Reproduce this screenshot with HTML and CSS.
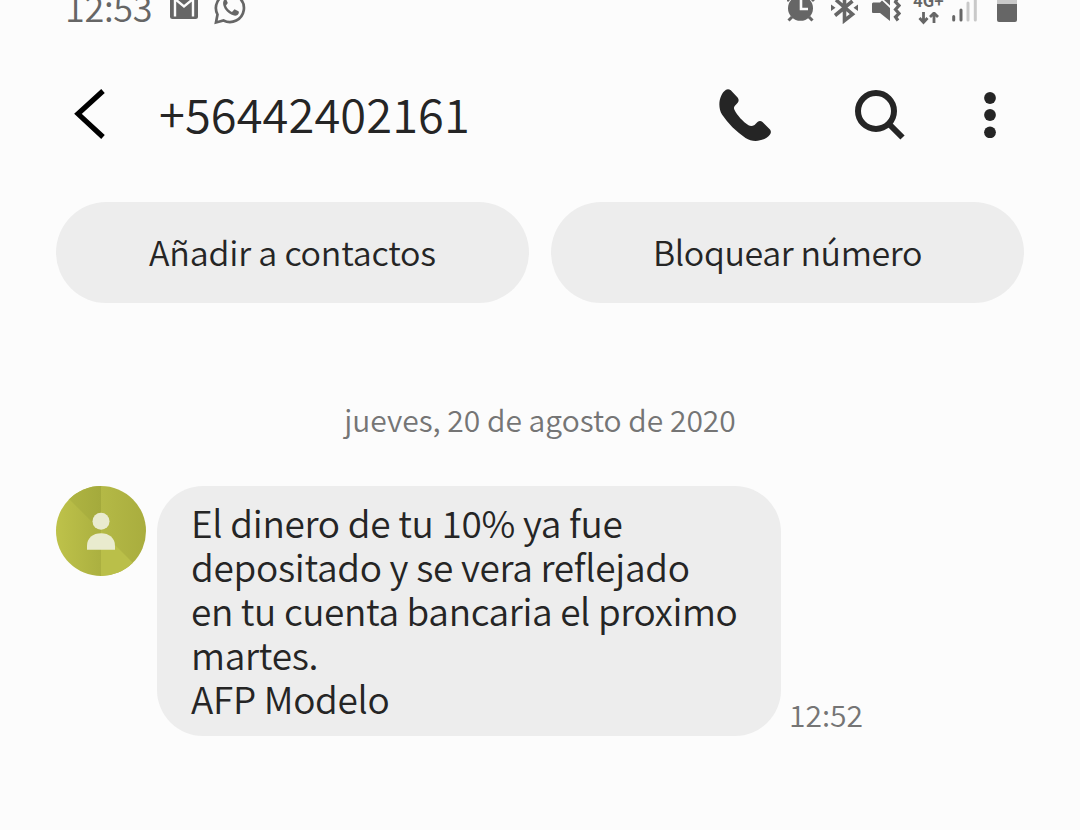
FILE: index.html
```html
<!DOCTYPE html>
<html lang="es">
<head>
  <meta charset="UTF-8" />
  <meta name="viewport" content="width=device-width, initial-scale=1.0"/>
  <title>+56442402161</title>
  <link rel="stylesheet" href="styles.css">
</head>
<body>
  <div class="statusbar">
    <span class="clock">12:53</span>
    <svg class="icon-mail" width="28" height="20" viewBox="0 0 28 20">
      <path d="M0 0H28V16.5Q28 19 25.500 19H2.500Q0 19 0 16.500Z" fill="#666"/>
      <path d="M5 16.500V-1L14 6.500L23 -1V16.500" fill="none" stroke="#fcfcfc" stroke-width="2.400"/>
    </svg>
    <svg class="icon-whatsapp" width="33" height="25" viewBox="0 0 33 25">
      <path d="M3.500 14.500A14 14 0 1 1 9.500 20.500L2 22.500Z" fill="none" stroke="#666" stroke-width="2.700"/>
      <path d="M10 0C8 3 9.500 8 13 11.500C17 15.300 21 16.500 23.500 15C25 14 25.200 12 24.500 11.300L20.500 9.300L18 12C15.500 11 12.500 7.500 12 5.500L13.800 3L12.500 0Z" fill="#666"/>
    </svg>
    <div class="status-right">
      <svg width="28" height="24" viewBox="0 0 28 24">
        <circle cx="13.500" cy="8.300" r="12.500" fill="#666"/>
        <path d="M5 17L1.500 20.500M22 17L25.500 20.500M0 1L2 -1M27 1L25 -1" stroke="#666" stroke-width="3"/>
        <path d="M14 0V9H21" fill="none" stroke="#fcfcfc" stroke-width="2.600"/>
      </svg>
      <svg class="icon-bt" width="27" height="24" viewBox="0 0 27 24">
        <path d="M5 0L21.500 14.200L13.500 20.500V-6M4 15.500L21.500 1" fill="none" stroke="#666" stroke-width="3.600"/>
        <path d="M0 4.500L4.500 7.700L0 11ZM27 4.500L22.500 7.700L27 11Z" fill="#666"/>
      </svg>
      <svg class="icon-mute" width="29" height="24" viewBox="0 0 29 24">
        <path d="M1 2.500H8L10 0.500L18 8V21L8 13H1Q0 13 0 12V3.500Z" fill="#666"/>
        <path d="M12 0H18V5.500Z" fill="#666"/>
        <path d="M25 -1L23.500 2L27 5.500L23.500 9.500L27 13.500L23.500 17L26 20.500" fill="none" stroke="#666" stroke-width="3.200"/>
      </svg>
      <div class="network">
        <span>4G+</span>
        <svg width="22" height="13" viewBox="0 0 22 13">
          <path d="M5.500 0V10.500M1.500 6L5.500 10.500L9.500 6M16 11V1M12 5L16 1L20 5" fill="none" stroke="#666" stroke-width="2.800"/>
        </svg>
      </div>
      <svg class="icon-signal" width="25" height="24" viewBox="0 0 25 24">
        <path d="M1.700 16.500V20M9 10V20" stroke="#666" stroke-width="3" stroke-linecap="round"/>
        <path d="M16 3V20M23.300 -2V20" stroke="#c9c9c9" stroke-width="3" stroke-linecap="round"/>
      </svg>
      <div class="battery"></div>
    </div>
  </div>

  <div class="header">
    <svg class="back" width="32" height="50" viewBox="0 0 32 50">
      <path d="M29 2L4 24.800L29 48" fill="none" stroke="#000" stroke-width="5.200"/>
    </svg>
    <h1>+56442402161</h1>
    <div class="actions">
      <svg class="call" width="52" height="52" viewBox="0 0 52 52">
        <path d="M7 0.700Q9.500 -0.500 11.800 1.300L18.800 8.800Q20.500 11.200 18.700 13.800L15.700 17Q14.500 18.500 15.300 20.500C18.500 27 24 32.500 29.500 36.300Q32.500 38 35.500 36L38.500 33Q41 31.200 43.500 33L51 40.500Q52.800 43 51 45.500C46.500 51.500 35 54.500 26.500 49C17 42.500 9 34.500 3 25.500C-2 17.500 0.500 5 7 0.700Z" fill="#252525"/>
      </svg>
      <svg class="search" width="50" height="50" viewBox="0 0 50 50">
        <circle cx="21" cy="21" r="18" fill="none" stroke="#252525" stroke-width="6"/>
        <path d="M34 34L47.500 47.500" stroke="#252525" stroke-width="6"/>
      </svg>
      <svg class="more" width="12" height="46" viewBox="0 0 12 46">
        <circle cx="6" cy="6" r="5.900" fill="#252525"/>
        <circle cx="6" cy="23" r="5.900" fill="#252525"/>
        <circle cx="6" cy="40.300" r="5.900" fill="#252525"/>
      </svg>
    </div>
  </div>

  <div class="buttons">
    <button class="button add">Añadir a contactos</button>
    <button class="button block">Bloquear número</button>
  </div>

  <p class="date">jueves, 20 de agosto de 2020</p>

  <div class="message">
    <svg class="avatar" width="90" height="90" viewBox="0 0 90 90">
      <defs>
        <clipPath id="round"><circle cx="45" cy="45" r="45"/></clipPath>
        <linearGradient id="left"><stop offset="0" stop-color="#bec24a"/><stop offset="1" stop-color="#abb040"/></linearGradient>
        <linearGradient id="right"><stop offset="0" stop-color="#b4b946"/><stop offset="1" stop-color="#a9ad3e"/></linearGradient>
        <linearGradient id="top"><stop offset="0" stop-color="#b3b845"/><stop offset="1" stop-color="#a4aa3c"/></linearGradient>
      </defs>
      <g clip-path="url(#round)">
        <rect width="45" height="90" fill="url(#left)"/>
        <rect x="45" width="45" height="90" fill="url(#right)"/>
        <path d="M0 0H45V45Z" fill="url(#top)"/>
        <path d="M45 45L90 90H45Z" fill="#babf49"/>
      </g>
      <circle cx="45" cy="35.300" r="8.500" fill="#e9ebce"/>
      <path d="M31 63.700V60C31 52 37 47.300 45 47.300S59 52 59 60V63.700Z" fill="#e9ebce"/>
    </svg>
    <div class="bubble">
      <span class="line">El dinero de tu 10% ya fue</span>
      <span class="line">depositado y se vera reflejado</span>
      <span class="line tight">en tu cuenta bancaria el proximo</span>
      <span class="line">martes.</span>
      <span class="line">AFP Modelo</span>
    </div>
    <span class="time">12:52</span>
  </div>
</body>
</html>
```
FILE: styles.css
```css
* {
  box-sizing: border-box;
}

body {
  margin: 0;
  height: 830px;
  overflow: hidden;
  background-color: #fcfcfc;
  color: #252525;
  font-family: "Noto Sans CJK SC", "Noto Sans", sans-serif;
  font-weight: 350;
}

svg {
  display: block;
  flex-shrink: 0;
}

.statusbar {
  display: flex;
  height: 28px;
  padding: 0 63px 0 65px;
  overflow: hidden;
  color: #666;
}

.clock {
  width: 105px;
  font-size: 36px;
  letter-spacing: -0.3px;
  line-height: 13px;
  white-space: nowrap;
}

.icon-whatsapp {
  margin-left: 16px;
}

.status-right {
  display: flex;
  margin-left: auto;
}

.icon-bt {
  margin-left: 16px;
}

.icon-mute {
  margin-left: 14px;
}

.network {
  display: flex;
  flex-direction: column;
  align-items: center;
  width: 29px;
  margin-left: 13px;
}

.network span {
  height: 12px;
  font-size: 16px;
  font-weight: bold;
  line-height: 0;
}

.icon-signal {
  margin-left: 9px;
}

.battery {
  width: 20px;
  height: 22px;
  margin-left: 20px;
  border-top: 4px solid #c9c9c9;
  border-radius: 0 0 2px 2px;
  background-color: #666;
}

.header {
  display: flex;
  align-items: center;
  height: 174px;
  padding: 0 84px 0 74px;
}

.back {
  margin-bottom: 2px;
}

.header h1 {
  margin: 0 0 5px 53px;
  font-size: 47px;
  font-weight: 350;
  letter-spacing: 0.1px;
  line-height: 60px;
}

.actions {
  display: flex;
  align-items: center;
  margin-left: auto;
}

.search {
  margin-left: 84px;
}

.more {
  margin-left: 79px;
}

.buttons {
  display: flex;
  gap: 22px;
  padding: 0 56px;
}

.button {
  flex: 1;
  height: 101px;
  padding: 0 0 1px;
  border: none;
  border-radius: 51px;
  background-color: #ededed;
  color: #252525;
  font-family: inherit;
  font-size: 34px;
  font-weight: inherit;
  line-height: 100px;
}

.add {
  letter-spacing: -0.2px;
}

.block {
  letter-spacing: -0.4px;
}

.date {
  margin: 93px 0 0;
  color: #757575;
  font-size: 30px;
  line-height: 46px;
  text-align: center;
}

.message {
  display: flex;
  margin-top: 44px;
  padding-left: 56px;
}

.bubble {
  width: 624px;
  height: 250px;
  margin-left: 11px;
  padding: 14px 34px 0;
  border-radius: 46px;
  background-color: #ededed;
  font-size: 37px;
  line-height: 44px;
}

.line {
  display: block;
  letter-spacing: -0.3px;
  white-space: nowrap;
}

.tight {
  letter-spacing: -0.38px;
}

.time {
  align-self: flex-end;
  margin-left: 8px;
  color: #757575;
  font-size: 30px;
  line-height: 44px;
}
```
